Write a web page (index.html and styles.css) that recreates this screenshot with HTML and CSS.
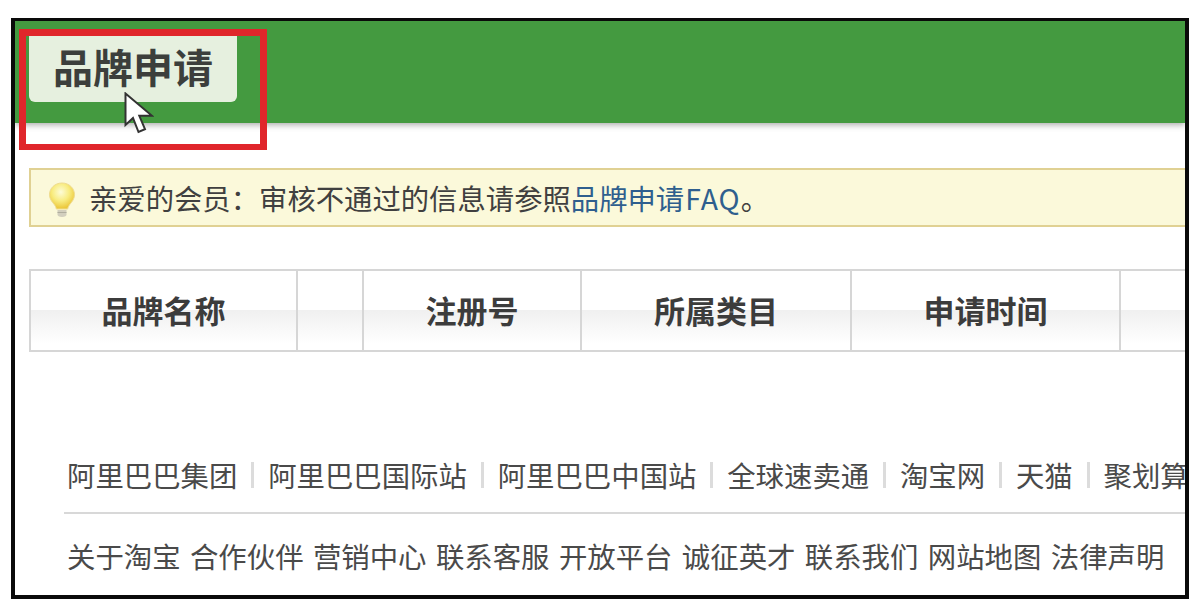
FILE: index.html
```html
<!DOCTYPE html>
<html lang="zh-CN">
<head>
<meta charset="utf-8">
<title>品牌申请</title>
<link rel="stylesheet" href="styles.css">
</head>
<body>
<main class="frame">
  <header class="topbar">
    <div class="tab">品牌申请</div>
  </header>
  <section class="notice">
    <svg class="bulb" viewBox="0 0 28 36" width="28" height="36" aria-hidden="true">
      <defs>
        <radialGradient id="glass" cx="45%" cy="35%" r="62%">
          <stop offset="0" stop-color="#fdfcd8"/>
          <stop offset="0.55" stop-color="#f8ec80"/>
          <stop offset="1" stop-color="#ecc83c"/>
        </radialGradient>
      </defs>
      <path d="M14 1C6.800 1 1.500 6.300 1.500 12.600c0 4.600 2.800 7.400 4.800 10 1.200 1.600 1.800 3 2 4.400h11.400c.2-1.400.8-2.800 2-4.400 2-2.600 4.800-5.400 4.800-10C26.500 6.300 21.200 1 14 1z" fill="url(#glass)" stroke="#efdc90" stroke-width="1"/>
      <path d="M9.500 28h9v4.500c0 1.500-1.500 2.500-4.500 2.500s-4.500-1-4.500-2.500z" fill="#d2cfbe"/>
      <path d="M9.500 30.500h9" stroke="#b0ae9e" stroke-width="1"/>
    </svg>
    <p class="notice-text">亲爱的会员：审核不通过的信息请参照<a class="link" href="#">品牌申请<span class="latin">FAQ</span></a>。</p>
  </section>
  <div class="thead">
    <div class="th">品牌名称</div>
    <div class="th"></div>
    <div class="th">注册号</div>
    <div class="th">所属类目</div>
    <div class="th">申请时间</div>
    <div class="th"></div>
  </div>
  <footer class="footer">
    <nav class="links-main">
      <a href="#">阿里巴巴集团</a><i class="sep"></i>
      <a href="#">阿里巴巴国际站</a><i class="sep"></i>
      <a href="#">阿里巴巴中国站</a><i class="sep"></i>
      <a href="#">全球速卖通</a><i class="sep"></i>
      <a href="#">淘宝网</a><i class="sep"></i>
      <a href="#">天猫</a><i class="sep"></i>
      <a href="#">聚划算</a>
    </nav>
    <nav class="links-sub">
      <a href="#">关于淘宝</a>
      <a href="#">合作伙伴</a>
      <a href="#">营销中心</a>
      <a href="#">联系客服</a>
      <a href="#">开放平台</a>
      <a href="#">诚征英才</a>
      <a href="#">联系我们</a>
      <a href="#">网站地图</a>
      <a href="#">法律声明</a>
    </nav>
  </footer>
  <div class="callout"></div>
  <svg class="cursor" viewBox="0 0 30 44" width="30" height="44" aria-hidden="true">
    <path d="M1.500 1.500V33l7.500-7 5.500 14 6.500-2.800-5.700-13.400H28z" fill="#fff" stroke="#333" stroke-width="2" stroke-linejoin="miter"/>
  </svg>
</main>
</body>
</html>
```
FILE: styles.css
```css
* { box-sizing: border-box; }
html, body { margin: 0; padding: 0; background: #fff; }
body {
  width: 1200px;
  height: 609px;
  overflow: hidden;
  font-family: "Noto Sans CJK SC", "Liberation Sans", sans-serif;
  color: #444;
}
a { color: inherit; text-decoration: none; }
p { margin: 0; }

.frame {
  position: relative;
  width: 1178px;
  height: 581px;
  margin: 18px 0 0 11px;
  border: solid #0a0a0a;
  border-width: 3px 4px 4px 4px;
  overflow: hidden;
  background: #fff;
}

.topbar {
  height: 102px;
  padding: 15px 0 0 14px;
  background: #449a40;
  box-shadow: 0 2px 6px rgba(70, 70, 70, .45);
}
.tab {
  width: 208px;
  height: 66px;
  padding: 0 0 6px 24px;
  display: flex;
  align-items: center;
  background: #e6f0df;
  border-radius: 0 0 6px 6px;
  font-size: 40px;
  font-weight: 700;
  color: #3c3f3c;
  white-space: nowrap;
}

.notice {
  display: flex;
  align-items: center;
  height: 59px;
  margin: 45px 0 0 14px;
  padding-left: 17px;
  background: #fbf9da;
  border: 2px solid #e0d193;
  border-right: 0;
}
.bulb { flex: none; margin: 4px 13px 0 0; }
.notice-text { font-size: 28.35px; white-space: nowrap; color: #404040; }
.link { color: #2f5f8e; }
.latin { margin-left: 1px; letter-spacing: 1px; }

.thead {
  display: grid;
  grid-template-columns: 267px 66px 218px 270px 269px 1fr;
  height: 83px;
  margin: 42px 0 0 14px;
  border: solid #d6d6d6;
  border-width: 2px 0 2px 2px;
  background: linear-gradient(#fff 0, #fff 49%, #f0f0f0 50%, #fff 92%);
}
.th {
  display: flex;
  align-items: center;
  justify-content: center;
  padding-bottom: 2px;
  border-right: 2px solid #d6d6d6;
  font-size: 31px;
  font-weight: 700;
  color: #3c3c3c;
}
.th:last-child { border-right: 0; }

.footer {
  margin: 91px 0 0 49px;
  font-size: 28.4px;
  color: #4a4a4a;
  white-space: nowrap;
}
.links-main {
  display: flex;
  align-items: center;
  gap: 13.9px;
  height: 71px;
  padding: 0 0 6px 3px;
  border-bottom: 2px solid #d8d8d8;
}
.sep {
  flex: none;
  width: 3px;
  height: 26px;
  background: #dcdcdc;
}
.links-sub {
  display: flex;
  align-items: center;
  gap: 9.400px;
  height: 83px;
  padding-left: 3px;
}

.callout {
  position: absolute;
  left: 4px;
  top: 8px;
  width: 248px;
  height: 121px;
  border: solid #e0262b;
  border-width: 7px 7px 6px 7px;
}
.cursor {
  position: absolute;
  left: 109px;
  top: 71px;
}
```
